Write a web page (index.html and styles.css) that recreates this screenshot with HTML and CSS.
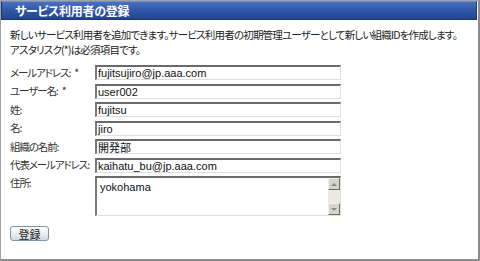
FILE: index.html
```html
<!DOCTYPE html>
<html lang="ja">
<head>
<meta charset="utf-8">
<title>サービス利用者の登録</title>
<link rel="stylesheet" href="styles.css">
</head>
<body>
<div class="frame">
  <div class="header">サービス利用者の登録</div>
  <div class="content">
    <p class="desc">新しいサービス利用者を追加できます。サービス利用者の初期管理ユーザーとして新しい組織IDを作成します。<br>アスタリスク(*)は必須項目です。</p>
    <div class="form">
      <label class="label">メールアドレス:<span class="req">*</span></label>
      <input class="field" type="text" value="fujitsujiro@jp.aaa.com">
      <label class="label">ユーザー名:<span class="req">*</span></label>
      <input class="field" type="text" value="user002">
      <label class="label">姓:</label>
      <input class="field" type="text" value="fujitsu">
      <label class="label">名:</label>
      <input class="field" type="text" value="jiro">
      <label class="label">組織の名前:</label>
      <input class="field" type="text" value="開発部">
      <label class="label">代表メールアドレス:</label>
      <input class="field" type="text" value="kaihatu_bu@jp.aaa.com">
      <label class="label label-top">住所:</label>
      <div class="area">
        <div class="area-text">yokohama</div>
        <div class="scroll">
          <div class="sbtn"><span class="tri-up"></span></div>
          <div class="track"></div>
          <div class="sbtn"><span class="tri-down"></span></div>
        </div>
      </div>
    </div>
    <button class="btn" type="button">登録</button>
  </div>
</div>
</body>
</html>
```
FILE: styles.css
```css
html, body {
  margin: 0;
  padding: 0;
  background: #ffffff;
}

body {
  font-family: "Noto Sans CJK JP", "Liberation Sans", sans-serif;
  color: #222222;
}

.frame {
  width: 480px;
  height: 261px;
  box-sizing: border-box;
  border: 1px solid #a2a2a2;
  border-right: 2px solid #8c8c8c;
  border-bottom: 2px solid #8c8c8c;
  background: #ffffff;
}

.header {
  height: 19px;
  box-sizing: border-box;
  margin-right: 1px;
  border: 1px solid #1b3675;
  border-top-color: #6f8fd0;
  background: linear-gradient(#4a70c0 0%, #3158aa 45%, #21458f 100%);
  color: #ffffff;
  font-weight: bold;
  font-size: 12px;
  line-height: 17px;
  padding-left: 13px;
  font-feature-settings: "palt";
  letter-spacing: -0.3px;
}

.content {
  padding: 7px 0 0 9px;
}

.desc {
  margin: 0;
  font-size: 10.5px;
  line-height: 15px;
  font-feature-settings: "palt";
  letter-spacing: -0.8px;
  white-space: nowrap;
}

.form {
  margin-top: 8px;
  display: grid;
  grid-template-columns: 85px 246px;
  row-gap: 3.5px;
  align-items: center;
}

.label {
  font-size: 10.5px;
  line-height: 14px;
  font-feature-settings: "palt";
  letter-spacing: -1.1px;
  white-space: nowrap;
  color: #333333;
}

.req {
  margin-left: 4px;
}

.label-top {
  align-self: start;
}

.field {
  display: block;
  width: 246px;
  height: 15px;
  box-sizing: border-box;
  margin: 0;
  padding: 0 0 0 1px;
  border-style: solid;
  border-width: 2px 1px 1px 2px;
  border-color: #6a6a6a #e0ded8 #e0ded8 #7a7a7a;
  background: #ffffff;
  font-family: "Liberation Sans", "Noto Sans CJK JP", sans-serif;
  font-size: 11px;
  line-height: 12px;
  color: #111111;
  outline: none;
}

.area {
  display: flex;
  height: 40px;
  box-sizing: border-box;
  border-style: solid;
  border-width: 2px 1px 1px 2px;
  border-color: #6a6a6a #e0ded8 #e0ded8 #7a7a7a;
  background: #ffffff;
}

.area-text {
  flex: 1;
  padding: 3px 0 0 3px;
  font-family: "Liberation Sans", sans-serif;
  font-size: 11px;
  line-height: 13px;
  color: #111111;
}

.scroll {
  width: 12px;
  display: flex;
  flex-direction: column;
  background: #ebe9e2;
}

.sbtn {
  height: 12px;
  box-sizing: border-box;
  border-style: solid;
  border-width: 1px;
  border-color: #f2f1ec #6c6c6c #6c6c6c #f2f1ec;
  background: #d6d3cb;
  display: flex;
  align-items: center;
  justify-content: center;
}

.track {
  flex: 1;
}

.tri-up {
  width: 0;
  height: 0;
  border-left: 3px solid transparent;
  border-right: 3px solid transparent;
  border-bottom: 3px solid #8a8a8a;
}

.tri-down {
  width: 0;
  height: 0;
  border-left: 3px solid transparent;
  border-right: 3px solid transparent;
  border-top: 3px solid #8a8a8a;
}

.btn {
  display: block;
  margin: 10px 0 0 0;
  width: 39px;
  height: 15px;
  box-sizing: border-box;
  padding: 0;
  border: 1px solid #8593a8;
  border-radius: 3px;
  background: linear-gradient(#fcfcfd 0%, #eceef2 50%, #d3d8df 100%);
  font-family: "Noto Sans CJK JP", sans-serif;
  font-size: 11px;
  line-height: 12px;
  color: #222222;
}
```
